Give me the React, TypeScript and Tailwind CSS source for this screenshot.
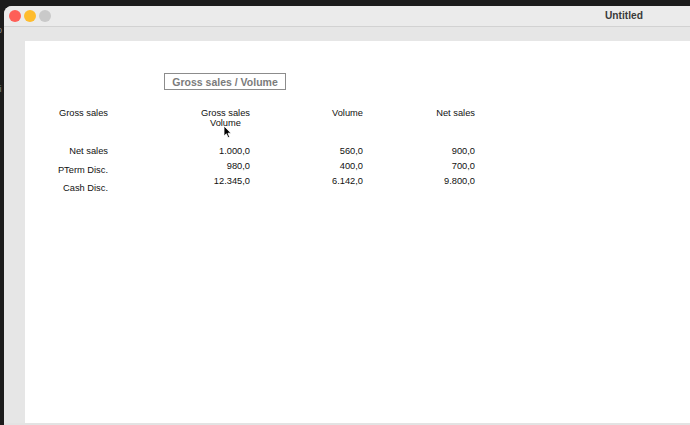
export default function App() {
  const labels = ['Net sales', 'PTerm Disc.', 'Cash Disc.'];
  const cols = [
    ['1.000,0', '980,0', '12.345,0'],
    ['560,0', '400,0', '6.142,0'],
    ['900,0', '700,0', '9.800,0'],
  ];

  return (
    <div
      className="flex h-[425px] w-[690px] overflow-hidden bg-[#1c1c1c] pt-[6px]"
      style={{ fontFamily: '"Liberation Sans", Arial, sans-serif' }}
    >
      {/* slice of the window behind */}
      <div className="flex w-[4px] flex-col overflow-hidden pt-[20px] text-[9px] leading-none text-[#8a8a8a]">
        <span className="-ml-[3px] mb-[50px]">o</span>
        <span className="-ml-[3px]">ti</span>
      </div>

      <div className="flex flex-1 flex-col overflow-hidden rounded-tl-[8px] bg-[#e6e6e6]">
        {/* title bar */}
        <div className="relative flex h-[21px] items-center border-b border-[#d2d2d2] bg-[#ebebeb] pl-[5px]">
          <div className="flex gap-[3px]">
            <span className="h-[12px] w-[12px] rounded-full bg-[#fe5f57]" />
            <span className="h-[12px] w-[12px] rounded-full bg-[#febc2e]" />
            <span className="h-[12px] w-[12px] rounded-full bg-[#c9c9c9]" />
          </div>
          <span className="ml-[554px] text-[10.2px] font-bold text-[#3a3a3a]">Untitled</span>
        </div>

        <div className="h-[14px]" />

        <div className="flex h-[382px]">
          <div className="w-[21px]" />
          <div className="relative flex-1 bg-white text-[9.3px] leading-[10px] text-[#111]">
            <div className="ml-[139px] mt-[32px] flex h-[17px] w-[122px] items-center justify-center border border-[#8c8c8c] text-[10.5px] font-bold text-[#7b7b7b]">
              Gross sales / Volume
            </div>

            {/* header row */}
            <div className="mt-[18px] grid grid-cols-[83px_142px_113px_112px] text-right">
              <div>Gross sales</div>
              <div className="flex justify-end">
                <div className="text-center">
                  Gross sales
                  <br />
                  Volume
                </div>
              </div>
              <div>Volume</div>
              <div>Net sales</div>
            </div>

            {/* body */}
            <div className="mt-[18px] grid grid-cols-[83px_142px_113px_112px] text-right">
              <div className="flex flex-col gap-[8.5px]">
                {labels.map((l) => (
                  <div key={l}>{l}</div>
                ))}
              </div>
              {cols.map((c, i) => (
                <div key={i} className="flex flex-col gap-[5px]">
                  {c.map((v) => (
                    <div key={v}>{v}</div>
                  ))}
                </div>
              ))}
            </div>

            {/* mouse pointer */}
            <svg className="absolute left-[198px] top-[84px]" width="9" height="14" viewBox="0 0 9 14">
              <path d="M1 1 L1 11 L3.4 8.8 L5 12.6 L6.6 11.9 L5 8.2 L8 8.2 Z" fill="#000" stroke="#fff" strokeWidth="0.8" />
            </svg>
          </div>
        </div>

        <div className="flex-1 bg-[#e3e3e3]" />
      </div>
    </div>
  );
}
